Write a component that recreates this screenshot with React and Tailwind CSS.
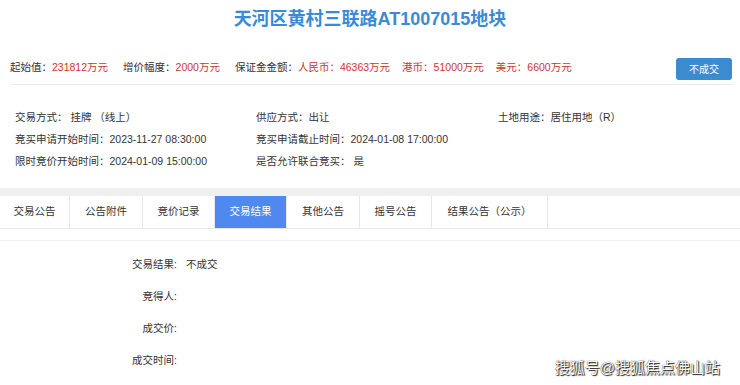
const tabs = [
    { name: "交易公告", width: "w-[70px]" },
    { name: "公告附件", width: "w-[73px]" },
    { name: "竞价记录", width: "w-[72px]" },
    { name: "交易结果", width: "w-[72px]", active: true },
    { name: "其他公告", width: "w-[73px]" },
    { name: "摇号公告", width: "w-[72px]" },
    { name: "结果公告（公示）", width: "w-[116px]" }
];

const info = [
    ["交易方式： 挂牌 （线上）", "供应方式：出让", "土地用途：居住用地（R）"],
    ["竞买申请开始时间：2023-11-27 08:30:00", "竞买申请截止时间：2024-01-08 17:00:00", ""],
    ["限时竞价开始时间：2024-01-09 15:00:00", "是否允许联合竞买： 是", ""]
];

const results = [
    ["交易结果:", "不成交"],
    ["竞得人:", ""],
    ["成交价:", ""],
    ["成交时间:", ""]
];

const App = () => {
    return (
        <div className="relative h-[385px] w-[740px] overflow-hidden bg-white font-['Liberation_Sans','Noto_Sans_CJK_SC',sans-serif] text-[#333]">
            <div className="flex h-[38px] items-center justify-center">
                <h1 className="text-[18px] font-bold text-[#3a8bd3]">
                    天河区黄村三联路AT1007015地块
                </h1>
            </div>

            <div className="ml-[10px] mr-[8px] flex h-[47px] items-end justify-between border-b border-[#e9e9ee] pb-[4px]">
                <div className="mb-[6px] flex text-[10.5px] leading-[14px]">
                    <span>
                        起始值：<span className="text-[#cd352e]">231812万元</span>
                    </span>
                    <span className="ml-[15px]">
                        增价幅度：<span className="text-[#cd352e]">2000万元</span>
                    </span>
                    <span className="ml-[15px]">
                        保证金金额：
                        <span className="text-[#cd352e]">
                            人民币：46363万元
                            <span className="ml-[12px]">港币：51000万元</span>
                            <span className="ml-[12px]">美元：6600万元</span>
                        </span>
                    </span>
                </div>

                <button className="h-[22px] w-[56px] rounded-[3px] bg-[#3d8bcf] text-[10px] text-white">
                    不成交
                </button>
            </div>

            <div className="grid grid-cols-[241px_242px_1fr] px-[15px] pb-[16px] pt-[21px] text-[10.5px]">
                {info.map((row, i) =>
                    row.map((cell, j) => (
                        <div key={`${i}-${j}`} className="h-[22px] leading-[22px]">
                            {cell}
                        </div>
                    ))
                )}
            </div>

            <div className="h-[8px] bg-[#efefef]" />

            <div className="flex h-[33px] border-b border-[#e8e8ec]">
                {tabs.map((tab) => (
                    <div
                        key={tab.name}
                        className={`${tab.width} flex items-center justify-center border-r border-[#e8e8ec] text-[10.5px] ${
                            tab.active ? "bg-[#4f88ee] text-white" : "text-[#333]"
                        }`}
                    >
                        {tab.name}
                    </div>
                ))}
            </div>

            <div className="h-[12px] border-b border-[#eeeeee]" />

            <div className="pt-[8px] text-[10.5px]">
                {results.map(([label, value]) => (
                    <div key={label} className="flex h-[32px] items-center">
                        <span className="w-[177px] text-right">{label}</span>
                        <span className="pl-[9px]">{value}</span>
                    </div>
                ))}
            </div>

            <div className="absolute bottom-[6px] right-[20px] text-[15px] text-white [text-shadow:0_0_1px_#000,1px_1px_1px_#222]">
                搜狐号@搜狐焦点佛山站
            </div>
        </div>
    );
};

export default App;
